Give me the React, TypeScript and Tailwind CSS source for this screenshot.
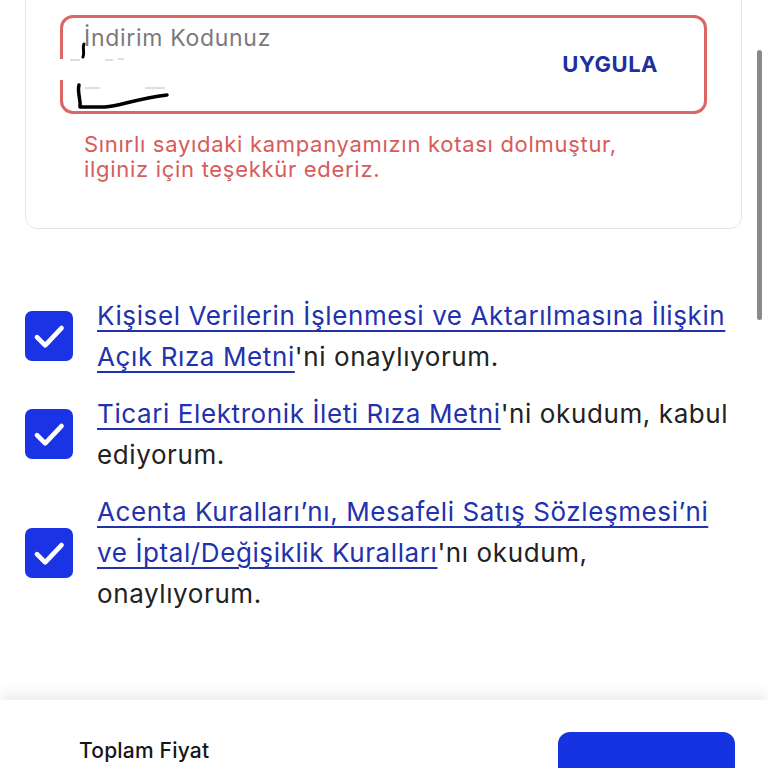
import React from "react";

const FONT = "font-['Inter','Noto_Sans',sans-serif]";

function CheckBox() {
  return (
    <div className="flex h-[50px] w-[48px] shrink-0 items-center justify-center rounded-[7px] bg-[#1a33e4]">
      <svg viewBox="0 0 24 24" className="h-[34px] w-[34px]" fill="none">
        <path d="M3.5 12.8l5.8 5.8L20.8 6.4" stroke="#fff" strokeWidth="3.3" strokeLinecap="round" strokeLinejoin="round" />
      </svg>
    </div>
  );
}

function Consent({ link, rest }: { link: React.ReactNode; rest: React.ReactNode }) {
  return (
    <div className="flex items-center gap-6">
      <CheckBox />
      <p className="whitespace-nowrap text-[26px] leading-[41px] tracking-[0.6px] text-[#222]">
        <a className="text-[#2231ad] underline decoration-[1.5px] underline-offset-[5px]">{link}</a>
        {rest}
      </p>
    </div>
  );
}

export default function App() {
  return (
    <div className={`relative h-[768px] w-full overflow-hidden bg-white ${FONT}`}>
      {/* discount card, top is scrolled off */}
      <div className="mx-[25px] mt-[-20px] w-[717px] rounded-b-[12px] border border-[#e6e6e6] px-[34px] pt-[34px] pb-[46px]">
        <div className="relative flex h-[99px] items-center justify-between rounded-[13px] border-[3px] border-[#dc6666] pl-[21px] pr-[46px]">
          <div className="flex flex-col self-stretch pt-[6px]">
            <span className="text-[23px] leading-[28px] tracking-[0.7px] text-[#7a7a7a]">İndirim Kodunuz</span>
          </div>
          <span className="text-[22px] font-bold tracking-[0.5px] text-[#1f2f9e]">UYGULA</span>
          {/* redacted code value */}
          <svg className="absolute left-[-3px] top-[-3px] h-[100px] w-[200px] overflow-visible" viewBox="0 0 200 100" fill="none">
            <rect x="-4" y="44" width="12" height="21" fill="#fff" />
            <path d="M10 45 h10 M45 45 h8 M58 44 h6 M25 73 h15 M85 73 h20" stroke="#d4d4d4" strokeWidth="1.5" />
            <path d="M24 29 C22 33 25 37 23 42" stroke="#000" strokeWidth="3" strokeLinecap="round" />
            <path d="M19 70 C17 78 21 84 20 92 L45 92 C60 91 75 84 107 80" stroke="#000" strokeWidth="3.5" strokeLinecap="round" strokeLinejoin="round" />
          </svg>
        </div>
        <p className="mt-[18px] pl-[24px] text-[22px] leading-[25px] tracking-[0.7px] text-[#d65c5c]">
          Sınırlı sayıdaki kampanyamızın kotası dolmuştur,
          <br />
          ilginiz için teşekkür ederiz.
        </p>
      </div>

      {/* scrollbar */}
      <div className="absolute right-[6px] top-[50px] h-[270px] w-[5px] rounded-full bg-[#8a8a8a]" />

      <div className="mt-[66px] flex flex-col gap-4 pl-[25px] pr-[30px]">
        <Consent
          link={
            <>
              Kişisel Verilerin İşlenmesi ve Aktarılmasına İlişkin
              <br />
              Açık Rıza Metni
            </>
          }
          rest="'ni onaylıyorum."
        />
        <Consent
          link="Ticari Elektronik İleti Rıza Metni"
          rest={
            <>
              'ni okudum, kabul
              <br />
              ediyorum.
            </>
          }
        />
        <Consent
          link={
            <>
              Acenta Kuralları’nı, Mesafeli Satış Sözleşmesi’ni
              <br />
              ve İptal/Değişiklik Kuralları
            </>
          }
          rest={
            <>
              'nı okudum,
              <br />
              onaylıyorum.
            </>
          }
        />
      </div>

      {/* sticky footer */}
      <div className="absolute inset-x-0 bottom-0 h-[68px] bg-white shadow-[0_-6px_14px_rgba(0,0,0,0.08)]">
        <div className="flex items-start justify-between pl-[79px] pr-[33px] pt-[32px]">
          <span className="mt-[3px] text-[21px] font-medium tracking-[0.2px] text-[#161616]">Toplam Fiyat</span>
          <div className="h-[60px] w-[177px] rounded-[12px] bg-[#1533e0]" />
        </div>
      </div>
    </div>
  );
}
